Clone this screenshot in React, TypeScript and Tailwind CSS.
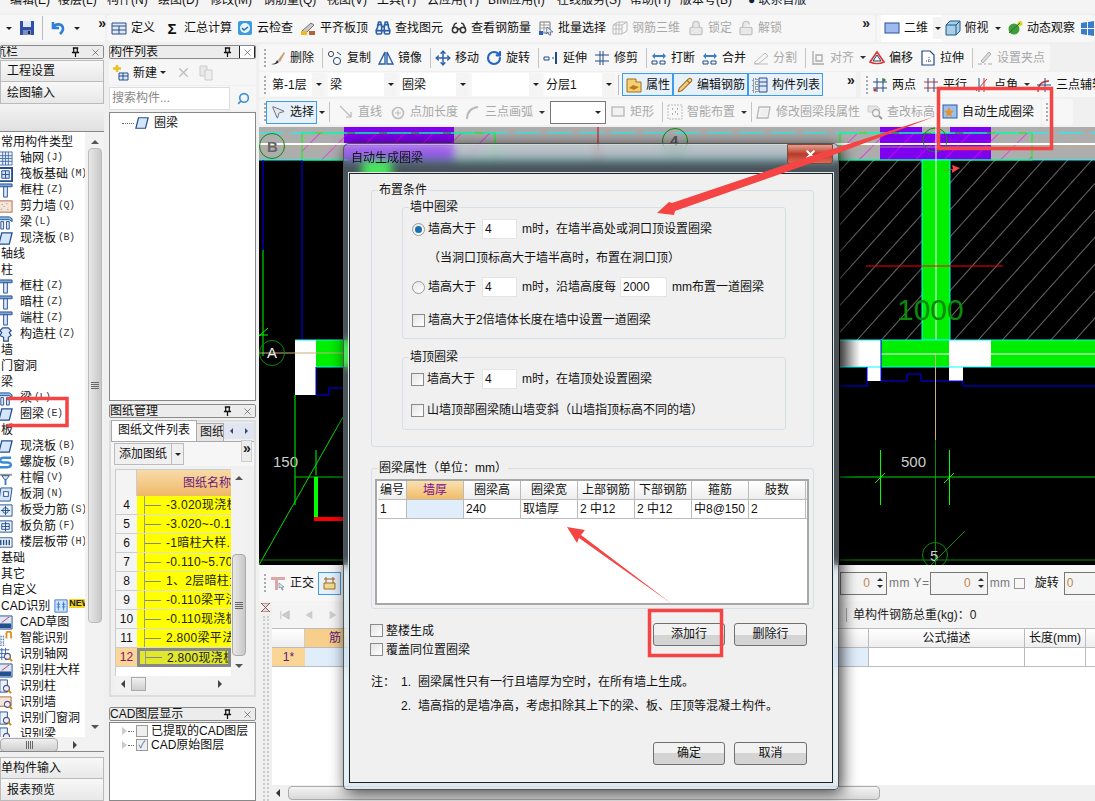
import React from 'react';
import { Binoculars, Glasses, Lock, LockOpen, Move, MousePointer2, Pencil, RotateCw, Search, X } from 'lucide-react';

// small drawn icons, 16px box
const Ico: React.FC<{ children: React.ReactNode; className?: string }> = ({ children, className }) => (
  <svg viewBox="0 0 16 16" className={className ?? 'w-4 h-4 shrink-0'}>{children}</svg>
);

const icons: Record<string, React.ReactNode> = {
  save: <Ico><path d="M1 1h14v14H1z" fill="#2f4fa8" /><path d="M4 1h8v6H4z" fill="#dfe8f5" /><path d="M4 10h8v5H4z" fill="#7b8fc0" /><path d="M9 11h2v3H9z" fill="#223" /></Ico>,
  undo: <Ico><path d="M3 2v6h6M3 8c2-5 10-5 10 1 0 2-1 3-3 5" fill="none" stroke="#2f7fd8" strokeWidth="2.6" /></Ico>,
  define: <Ico><path d="M1 3h14v11H1z" fill="#dfe8f5" stroke="#2a4f8a" /><path d="M1 6h14M1 10h14M8 6v8" stroke="#2a4f8a" /></Ico>,
  cloud: <Ico><rect x="1" y="1" width="14" height="14" rx="2" fill="#3a9be0" /><circle cx="8" cy="8" r="5" fill="#e8f4ff" /><path d="M5 8l2 2 4-3" fill="none" stroke="#2368b0" strokeWidth="1.4" /></Ico>,
  level: <Ico><path d="M2 11l9-8 3 2-8 8z" fill="#c9c9c9" stroke="#777" /><path d="M1 11h6v4H1z" fill="#f2b820" /><path d="M9 11h6v4H9z" fill="#b4643a" /></Ico>,
  binoc: <Ico><Binoculars size={16} color="#2a5fa8" strokeWidth={2.4} /></Ico>,
  glasses: <Ico><Glasses size={16} color="#333" strokeWidth={2.2} /></Ico>,
  lock: <Ico><Lock size={16} color="#c4c4c4" fill="#e8e8e8" strokeWidth={2} /></Ico>,
  unlock: <Ico><LockOpen size={16} color="#c4c4c4" fill="#e8e8e8" strokeWidth={2} /></Ico>,
  batch: <Ico><path d="M2 2h10v11H2z" fill="#fff" stroke="#777" /><path d="M2 5h10M2 8h10M6 2v11" stroke="#999" /><path d="M1 11h4v4H1z" fill="#2a5fc8" /><path d="M9 7l6 5-3 0 1 3-2 0-1-3-2 2z" fill="#dfe8f5" stroke="#346" strokeWidth=".6" /></Ico>,
  grid3d: <Ico><path d="M1 5l5-3h9v9l-5 3H1zM1 5h9v9M10 5l5-3M4 3v11M7 2v12M1 9h9" fill="none" stroke="#bbb" /></Ico>,
  twoD: <Ico><rect x="1" y="3" width="14" height="10" fill="#9dbbee" stroke="#2a4f9a" /></Ico>,
  cube: <Ico><path d="M1 5l4-4h10v10l-4 4H1z" fill="#a9cfe8" stroke="#1d5a88" /><path d="M1 5h10v10M11 5l4-4" fill="none" stroke="#1d5a88" /></Ico>,
  orbit: <Ico><circle cx="7" cy="9" r="5.5" fill="#3f9e3a" /><circle cx="13" cy="3.5" r="2.5" fill="#d8d820" /><path d="M2 13l11-10" stroke="#2a6a2a" /></Ico>,
  win: <Ico><path d="M2 3l6-1v6H2zM9 2l6-1v7H9zM2 9h6v6l-6-1zM9 9h6v7l-6-1z" fill="#3a7cc8" /></Ico>,
  brush: <Ico><path d="M1 14c3 0 5-1 6-4l2 2c-2 2-5 3-8 2z" fill="#333" /><path d="M8 10l6-8 1 1-5 9z" fill="#c8a070" /></Ico>,
  copy: <Ico><circle cx="4" cy="4" r="2.6" fill="none" stroke="#445" /><circle cx="10" cy="11" r="3.6" fill="none" stroke="#246" /><path d="M10 2l4 3" stroke="#246" /></Ico>,
  mirror: <Ico><path d="M7 2v12H1zM9 2v12h6z" fill="none" stroke="#2a5fa8" strokeWidth="1.4" /></Ico>,
  move: <Ico><Move size={16} color="#2a5fa8" strokeWidth={2.2} /></Ico>,
  rotate: <Ico><RotateCw size={16} color="#2364c0" strokeWidth={3.2} /></Ico>,
  extend: <Ico><path d="M1 7h5v3H1zM9 8h2" fill="none" stroke="#234a88" /><path d="M13 2v12" stroke="#234a88" strokeWidth="2" /></Ico>,
  trim: <Ico><path d="M1 5h14M1 11h14" stroke="#234a88" /><path d="M6 1v14M9 1v14" stroke="#234a88" /></Ico>,
  brk: <Ico><path d="M1 11h5v3H1zM9 11h5v3H9z" fill="none" stroke="#234a88" /><path d="M1 6l3-3v2h8V3l3 3-3 3V7H4v2z" fill="#3a7cc8" /></Ico>,
  split: <Ico><path d="M1 13l11-10 3 3-10 8z" fill="none" stroke="#bbb" /><path d="M1 14h14" stroke="#bbb" /></Ico>,
  align: <Ico><path d="M3 1v14M3 14h11M6 5h6v6H6z" fill="none" stroke="#aaa" strokeWidth="1.3" /></Ico>,
  offset: <Ico><path d="M1 12l7-10 7 10c-4 2-10 2-14 0z" fill="none" stroke="#d33" strokeWidth="1.6" /><path d="M4 11l4-6 4 6z" fill="none" stroke="#246" /></Ico>,
  stretch: <Ico><path d="M2 1h8l4 4v10H2z" fill="#fff" stroke="#234a88" strokeWidth="1.2" /><path d="M9 7v6M6 11h6" stroke="#234a88" strokeDasharray="1 1" /></Ico>,
  grip: <Ico><path d="M4 11l8-9 2 2-8 9z" fill="#ddd" stroke="#aaa" /><path d="M1 14h4M7 14h2M11 14h4" stroke="#aaa" /></Ico>,
  folder: <Ico><path d="M1 2h9v3h5v10H1z" fill="#f6cf70" stroke="#a07020" /><path d="M3 11l4-3 6 2-5 3z" fill="#b97a20" /></Ico>,
  pencil: <Ico><Pencil size={16} color="#a07020" fill="#f2cf80" strokeWidth={1.6} /></Ico>,
  list: <Ico><path d="M1 2h4v3H1zM1 7h4v3H1zM1 12h4v3H1z" fill="none" stroke="#444" strokeDasharray="1 1" /><path d="M7 1h8v14H7zM7 5h8M7 9h8" fill="#dbe7f8" stroke="#2a4f8a" /></Ico>,
  two: <Ico><path d="M1 5h14M1 11h14M5 1v14M11 1v14" stroke="#234a88" /><circle cx="12" cy="3" r="1.6" fill="#3a8a2a" /><circle cx="3" cy="13" r="1.6" fill="#b33" /></Ico>,
  par: <Ico><path d="M1 5h14M1 11h14" stroke="#c33" /><path d="M5 1v14M11 1v14" stroke="#234a88" /></Ico>,
  ang: <Ico><path d="M1 11h14M5 1v14" stroke="#234a88" /><path d="M2 14L13 2M10 1v14" stroke="#c33" /></Ico>,
  tri: <Ico><path d="M2 15c0-7 4-11 11-11" fill="none" stroke="#c33" strokeWidth="1.4" /><path d="M1 8h14M9 1v14" stroke="#234a88" /></Ico>,
  cursor: <Ico><MousePointer2 size={16} color="#555" fill="#e8e8f0" strokeWidth={1.2} /></Ico>,
  gline: <Ico><path d="M2 2l11 11M13 8v5H8" fill="none" stroke="#bbb" strokeWidth="1.2" /></Ico>,
  glen: <Ico><circle cx="8" cy="9" r="5.5" fill="none" stroke="#bbb" strokeWidth="1.6" /><path d="M8 6v6M5 9h6" stroke="#bbb" /></Ico>,
  garc: <Ico><path d="M2 15c0-7 4-11 11-12" fill="none" stroke="#bbb" strokeWidth="2" /></Ico>,
  grect: <Ico><rect x="2" y="3" width="12" height="9" fill="#f2f2f2" stroke="#bbb" strokeWidth="1.4" /></Ico>,
  gsmart: <Ico><rect x="1" y="1" width="14" height="14" fill="none" stroke="#bbb" strokeDasharray="2 1" /><path d="M5 5h1M10 5h1M5 10h1M10 10h1M8 8h1" stroke="#aaa" strokeWidth="2" /></Ico>,
  gslab: <Ico><path d="M3 3h11l-2 11H1z" fill="none" stroke="#bbb" strokeWidth="1.4" /><path d="M5 5h7l-1 7H4z" fill="#eee" /></Ico>,
  gsearch: <Ico><path d="M1 2h9l3 3-2 3H1z" fill="#e6e6e6" stroke="#ccc" /><circle cx="9" cy="9" r="3.5" fill="#f6f6f6" stroke="#aaa" strokeWidth="1.4" /><path d="M12 12l3 3" stroke="#999" strokeWidth="2" /></Ico>,
  auto: <Ico><rect x="1" y="1" width="14" height="13" fill="#9cc0ea" stroke="#2a5fa8" /><path d="M7 3l1.5 3.5L12 7l-3 2.4 1 3.6-3-2-3 2 1-3.6L2 7l3.500-.5z" fill="#e8902a" /></Ico>,
  grid: <Ico><path d="M1 1h14v14H1zM1 5h14M1 8h14M1 11h14M5 1v14M8 1v14M11 1v14" fill="#eef3fa" stroke="#3562a8" strokeWidth=".9" /></Ico>,
  raft: <Ico><path d="M1 1h14v14H1z" fill="#fff" stroke="#274f90" strokeWidth="2" /><path d="M4 4h8v8H4zM4 8h8M8 4v8" fill="#cfdff2" stroke="#274f90" /></Ico>,
  tcol: <Ico><path d="M1 1h14v3H1z" fill="#7ea6d8" stroke="#24508f" /><path d="M6 4h4v11H6z" fill="#dbe7f8" stroke="#24508f" /></Ico>,
  wall: <Ico><rect x="1" y="2" width="14" height="12" fill="#f3e5d8" stroke="#b4643a" /><path d="M3 11h1M6 8h1M10 11h1M9 5h1M4 6h1" stroke="#888" /></Ico>,
  beam: <Ico><path d="M1 2h11l3 2v3l-3-2H1z" fill="#8cc0e8" stroke="#24508f" /><path d="M3 7h3v8H3zM9 7h3v8H9z" fill="#dbe7f8" stroke="#24508f" /></Ico>,
  slab: <Ico><path d="M4 2h11l-3 12H1z" fill="#d6e6fa" stroke="#24508f" strokeWidth="1.4" /></Ico>,
  colz: <Ico><path d="M5 1h6l3 3-2 2 2 3-3 2v4H6v-4L2 9l2-3-2-2z" fill="#dbe7f8" stroke="#24508f" strokeWidth="1.3" /></Ico>,
  spiral: <Ico><path d="M14 3H6C1 3 1 8 6 8h4c5 0 5 5 0 5H2" fill="none" stroke="#3a8ad8" strokeWidth="2.6" /></Ico>,
  capv: <Ico><path d="M1 3h14v2H1z" fill="#999" /><path d="M4 5l3 4h2l3-4z" fill="#dbe7f8" stroke="#24508f" /><path d="M7 9h2v6H7z" fill="#3a7cc8" /></Ico>,
  hole: <Ico><path d="M3 1h12l-2 14H1z" fill="#d6e6fa" stroke="#24508f" /><rect x="6" y="5" width="5" height="5" fill="#fff" stroke="#24508f" /></Ico>,
  plateRebar: <Ico><path d="M1 2h14v12H1z" fill="#eaf1fa" stroke="#24508f" /><path d="M8 3v10M3 8h10" stroke="#24508f" /><circle cx="8" cy="8" r="3" fill="none" stroke="#24508f" /></Ico>,
  negRebar: <Ico><path d="M1 2h14v12H1z" fill="#eaf1fa" stroke="#24508f" /><path d="M4 5h8v6H4zM8 3v10M4 8h8" fill="none" stroke="#24508f" /></Ico>,
  strip: <Ico><path d="M1 3h14v10H1z" fill="#fff" stroke="#24508f" /><path d="M3 5v6M6 5v6M9 5v6M12 5v6" stroke="#24508f" strokeWidth="1.6" /></Ico>,
  cad: <Ico><path d="M1 1h14v14H1z" fill="#dbe7f8" stroke="#24508f" /><path d="M2 9h12v5H2z" fill="#24508f" /><path d="M4 8l8-6" stroke="#d33" /></Ico>,
  smartcad: <Ico><path d="M1 6h6M1 9h6M1 12h6M1 15h6M3 5v11M6 5v11" stroke="#3562a8" strokeDasharray="1 1" /><path d="M9 8V3a2.500 2.500 0 015 0v5" fill="none" stroke="#e09020" strokeWidth="2" /></Ico>,
  rgrid: <Ico><path d="M1 3h11M1 7h11M1 11h11M4 1v13M8 1v13" stroke="#3562a8" /><circle cx="10" cy="10" r="3.200" fill="#eef" stroke="#557" strokeWidth="1.2" /><path d="M12 12l3 3" stroke="#c80" strokeWidth="2" /></Ico>,
  rcol: <Ico><path d="M2 1h8v13H2z" fill="#eaf1fa" stroke="#24508f" /><circle cx="9" cy="10" r="3.200" fill="#eef" stroke="#557" strokeWidth="1.2" /><path d="M11 12l3 3" stroke="#c80" strokeWidth="2" /></Ico>,
  rwall: <Ico><path d="M1 2h13v10H1z" fill="#f3e5d8" stroke="#b4643a" /><circle cx="10" cy="10" r="3.200" fill="#eef" stroke="#557" strokeWidth="1.2" /><path d="M12 12l3 3" stroke="#c80" strokeWidth="2" /></Ico>,
  newlist: <Ico><path d="M1 1h14v14H1z" fill="#d6e6fa" stroke="#2a6fc8" /><path d="M5 3v10M11 3v10M3 6h4M3 9h4M9 6h4M9 9h4" stroke="#2a6fc8" /></Ico>,
  newDoc: <Ico><path d="M6 8h9v7H6zM6 11h9M10 8v7" fill="#dfe8f5" stroke="#24508f" /><path d="M4 0v7M0 3.500h8" stroke="#e8c020" strokeWidth="2.400" /></Ico>,
  copyDoc: <Ico><path d="M2 1h7v10H2z" fill="#e8e8e8" stroke="#ccc" /><path d="M7 5h7v10H7z" fill="#eee" stroke="#ccc" /></Ico>,
  pencilLevel: <Ico><path d="M2 8h11v6H2z" fill="#f3d890" stroke="#a07020" /><path d="M4 8V2M11 8V2M2 4h11" stroke="#a05a20" /></Ico>,
  ortho: <Ico><path d="M1 2h14v3H1zM5 5h3v10H5z" fill="#dba8a8" /><path d="M9 8l5 4-2 0 1 3h-1l-1-3-2 1z" fill="#dfe8f5" stroke="#468" strokeWidth=".5" /></Ico>,
};

const Tool: React.FC<{ icon: string; label: string; w: string; dim?: boolean; arrow?: boolean }> = ({ icon, label, w, dim, arrow }) => (
  <div className={`flex items-center gap-[4px] shrink-0 ${w} ${dim ? 'text-[#a8a8a8]' : 'text-[#111]'}`}>
    {icon === 'sigma' ? <span className="w-4 text-center text-[15px] font-bold leading-none">Σ</span> : icons[icon]}
    <span className="whitespace-nowrap">{label}</span>
    {arrow && <span className="ml-[2px] w-0 h-0 border-x-[3px] border-x-transparent border-t-[3px] border-t-[#333]" />}
  </div>
);

const Sep = () => <div className="w-px h-[20px] mx-[4px] bg-[#c4c4c4] shrink-0" />;
const Handle = () => (
  <div className="w-[10px] flex flex-col items-center gap-[2px] shrink-0">
    <span className="w-[2px] h-[2px] bg-[#aaa]" />
    <span className="w-[2px] h-[2px] bg-[#aaa]" />
    <span className="w-[2px] h-[2px] bg-[#aaa]" />
    <span className="w-[2px] h-[2px] bg-[#aaa]" />
    <span className="w-[2px] h-[2px] bg-[#aaa]" />
  </div>
);
const Caret = ({ className }: { className?: string }) => (
  <span className={`w-0 h-0 border-x-[3px] border-x-transparent border-t-[3px] border-t-[#222] shrink-0 ${className ?? ''}`} />
);
const Chevrons = () => <span className="text-[14px] font-bold leading-none tracking-[-1px] text-[#222] shrink-0">»</span>;

const PanelHead: React.FC<{ title: string; clip?: boolean; boxed?: boolean }> = ({ title, clip, boxed }) => (
  <div className="h-[14px] border border-[#8a8a8a] rounded-[2px] bg-[#ececec] flex items-center justify-between overflow-hidden shrink-0">
    <span className={`whitespace-nowrap leading-none ${clip ? '-ml-[19px]' : ''}`}>{title}</span>
    <div className="flex items-center shrink-0 bg-[#ececec]">
      <svg viewBox="0 0 10 12" className="w-[9px] h-[11px] mr-[7px]"><path d="M2 1h6M3 1v5h4V1M1 6h8M5 6v5" fill="none" stroke="#111" strokeWidth="1.400" /></svg>
      <div className={`w-[16px] h-[12px] flex items-center justify-center ${boxed ? 'bg-white border-x border-[#222]' : ''}`}>
        <X size={11} color="#333" strokeWidth={1.2} />
      </div>
    </div>
  </div>
);

const menus = ['编辑(E)', '楼层(L)', '构件(N)', '绘图(D)', '修改(M)', '钢筋量(Q)', '视图(V)', '工具(T)', '云应用(Y)', 'BIM应用(I)', '在线服务(S)', '帮助(H)', '版本号(B)'];
const menuWidths = ['w-[48px]', 'w-[49px]', 'w-[51px]', 'w-[52px]', 'w-[53px]', 'w-[64px]', 'w-[50px]', 'w-[50px]', 'w-[61px]', 'w-[69px]', 'w-[73px]', 'w-[50px]', 'w-[68px]'];

const MenuBar = () => (
  <div className="h-[13px] bg-[#f4f4f4] overflow-hidden flex pl-[10px] shrink-0">
    {menus.map((m, i) => (
      <span key={m} className={`${menuWidths[i]} shrink-0 -mt-[8px] whitespace-nowrap leading-[16px]`}>{m}</span>
    ))}
    <span className="-mt-[8px] leading-[16px] whitespace-nowrap text-[#123]">● 联系首版</span>
  </div>
);

const TopToolbar = () => (
  <div className="h-[30px] flex items-center shrink-0">
    <div className="w-[105px] h-[27px] bg-[#f7f7f7] flex items-center pl-[6px] relative">
      <Caret />
      <span className="w-[9px]" />
      {icons.save}
      <div className="w-px h-[24px] bg-[#bbb] mx-[7px]" />
      {icons.undo}
      <Caret className="ml-[8px]" />
      <div className="ml-[18px] -mt-[10px]"><Chevrons /></div>
    </div>
    <div className="ml-[2px] w-[768px] h-[27px] bg-[#f7f7f7] flex items-center pl-[4px] pr-[6px] rounded-sm">
      <Tool icon="define" label="定义" w="w-[53px]" />
      <Tool icon="sigma" label="汇总计算" w="w-[73px]" />
      <Tool icon="cloud" label="云检查" w="w-[63px]" />
      <Tool icon="level" label="平齐板顶" w="w-[75px]" />
      <Tool icon="binoc" label="查找图元" w="w-[76px]" />
      <Tool icon="glasses" label="查看钢筋量" w="w-[87px]" />
      <Tool icon="batch" label="批量选择" w="w-[74px]" />
      <Tool icon="grid3d" label="钢筋三维" w="w-[76px]" dim />
      <Tool icon="lock" label="锁定" w="w-[50px]" dim />
      <Tool icon="unlock" label="解锁" w="w-[60px]" dim />
      <div className="ml-auto -mt-[10px]"><Chevrons /></div>
    </div>
    <div className="ml-[2px] flex-1 h-[27px] bg-[#f7f7f7] flex items-center pl-[4px] overflow-hidden rounded-sm">
      <div className="flex items-center bg-white h-[27px] pl-[3px] w-[61px] shrink-0">
        <Tool icon="twoD" label="二维" w="w-[49px]" />
        <div className="w-[12px] h-[22px] bg-[#f4f4f4] flex items-center justify-center"><Caret /></div>
      </div>
      <div className="w-[4px]" />
      <Tool icon="cube" label="俯视" w="w-[50px]" />
      <Caret />
      <div className="w-[10px]" />
      <Tool icon="orbit" label="动态观察" w="w-[72px]" />
      {icons.win}
    </div>
  </div>
);

const Row2 = () => (
  <div className="h-[29px] flex items-center shrink-0">
    <div className="w-[791px] h-[27px] bg-[#f7f7f7] rounded-sm flex items-center pl-[1px]">
      <Handle />
      <Tool icon="brush" label="删除" w="w-[48px]" />
      <Sep />
      <Tool icon="copy" label="复制" w="w-[51px]" />
      <Tool icon="mirror" label="镜像" w="w-[48px]" />
      <Sep />
      <Tool icon="move" label="移动" w="w-[51px]" />
      <Tool icon="rotate" label="旋转" w="w-[48px]" />
      <Sep />
      <Tool icon="extend" label="延伸" w="w-[51px]" />
      <Tool icon="trim" label="修剪" w="w-[48px]" />
      <Sep />
      <Tool icon="brk" label="打断" w="w-[51px]" />
      <Tool icon="brk" label="合并" w="w-[51px]" />
      <Tool icon="split" label="分割" w="w-[48px]" dim />
      <Sep />
      <Tool icon="align" label="对齐" w="w-[59px]" dim arrow />
      <Tool icon="offset" label="偏移" w="w-[51px]" />
      <Tool icon="stretch" label="拉伸" w="w-[48px]" />
      <Sep />
      <Tool icon="grip" label="设置夹点" w="w-[70px]" dim />
    </div>
  </div>
);

const Select: React.FC<{ label?: string; w: string }> = ({ label, w }) => (
  <div className={`${w} h-[23px] bg-white flex items-center justify-between pl-[2px] shrink-0`}>
    <span>{label}</span>
    <div className="w-[13px] h-[23px] bg-[#f4f4f4] flex items-center justify-center"><Caret /></div>
  </div>
);

const Toggle: React.FC<{ icon: string; label: string; w: string }> = ({ icon, label, w }) => (
  <div className={`${w} h-[23px] bg-[#e6f1fc] border border-[#3d9be9] flex items-center gap-[4px] pl-[3px] shrink-0`}>
    {icons[icon]}
    <span className="whitespace-nowrap">{label}</span>
  </div>
);

const Row3 = () => (
  <div className="h-[25px] flex items-center shrink-0">
    <div className="w-[597px] h-[25px] bg-[#f7f7f7] flex items-center pl-[1px]">
      <Handle />
      <Select label="第-1层" w="w-[55px]" />
      <span className="w-[3px]" />
      <Select label="梁" w="w-[69px]" />
      <span className="w-[3px]" />
      <Select label="圈梁" w="w-[69px]" />
      <span className="w-[3px]" />
      <Select w="w-[70px]" />
      <span className="w-[2px]" />
      <Select label="分层1" w="w-[71px]" />
      <div className="w-px h-[20px] bg-[#bbb] mx-[3px]" />
      <Toggle icon="folder" label="属性" w="w-[51px]" />
      <Toggle icon="pencil" label="编辑钢筋" w="w-[75px]" />
      <Toggle icon="list" label="构件列表" w="w-[75px]" />
      <div className="ml-[24px] -mt-[10px]"><Chevrons /></div>
    </div>
    <div className="ml-[5px] flex-1 h-[25px] bg-[#f7f7f7] flex items-center overflow-hidden pl-[1px]">
      <Handle />
      <Tool icon="two" label="两点" w="w-[51px]" />
      <Tool icon="par" label="平行" w="w-[51px]" />
      <Tool icon="ang" label="点角" w="w-[62px]" arrow />
      <Tool icon="tri" label="三点辅轴" w="w-[70px]" />
    </div>
  </div>
);

const Row4 = () => (
  <div className="h-[30px] flex items-center shrink-0">
    <div className="w-[782px] h-[26px] bg-[#f7f7f7] rounded-sm flex items-center pl-[1px]">
      <Handle />
      <div className="w-[51px] -ml-[4px] h-[23px] bg-[#e6f1fc] border border-[#3d9be9] flex items-center gap-[4px] pl-[3px] shrink-0">
        {icons.cursor}
        <span>选择</span>
      </div>
      <Caret className="ml-[2px]" />
      <Sep />
      <span className="w-[4px]" />
      <Tool icon="gline" label="直线" w="w-[52px]" dim />
      <Tool icon="glen" label="点加长度" w="w-[75px]" dim />
      <Tool icon="garc" label="三点画弧" w="w-[85px]" dim arrow />
      <div className="w-[56px] h-[23px] bg-white border border-[#777] flex items-center justify-end pr-[4px] shrink-0"><Caret /></div>
      <span className="w-[4px]" />
      <Tool icon="grect" label="矩形" w="w-[48px]" dim />
      <Sep />
      <Tool icon="gsmart" label="智能布置" w="w-[80px]" dim arrow />
      <Sep />
      <Tool icon="gslab" label="修改圈梁段属性" w="w-[111px]" dim />
      <Tool icon="gsearch" label="查改标高" w="w-[75px]" dim />
      <Tool icon="auto" label="自动生成圈梁" w="w-[96px]" />
    </div>
    <div className="ml-[1px] w-[31px] h-[26px] bg-[#f7f7f7] flex items-center rounded-sm"><Handle /></div>
  </div>
);

// the drawing behind the dialog
const CadView = () => (
  <svg viewBox="259 127 836 438" className="w-[836px] h-[438px] shrink-0 block">
    <defs>
      <pattern id="hatch" patternUnits="userSpaceOnUse" width="18" height="18" patternTransform="rotate(42)">
        <line x1="0" y1="0" x2="0" y2="18" stroke="#d0d0d0" strokeWidth="1" />
      </pattern>
      <pattern id="pink" patternUnits="userSpaceOnUse" width="20" height="20" patternTransform="rotate(45)">
        <line x1="0" y1="0" x2="0" y2="20" stroke="#f0f" strokeWidth="1.200" />
      </pattern>
      <linearGradient id="fade" x1="0" x2="1" y1="0" y2="0">
        <stop offset="0" stopColor="#777" />
        <stop offset="0.5" stopColor="#fff" />
      </linearGradient>
    </defs>
    <rect x="259" y="127" width="836" height="438" fill="#000" />
    <rect x="259" y="127" width="836" height="33" fill="#adadad" />
    <rect x="344" y="127" width="110" height="33" fill="#7f00ee" />
    <rect x="880" y="127" width="111" height="33" fill="#7f00ee" />
    <rect x="922" y="127" width="28" height="6" fill="#adadad" />
    <rect x="302" y="133" width="193" height="27" fill="url(#pink)" stroke="#0f0" />
    <rect x="840" y="133" width="192" height="27" fill="url(#pink)" stroke="#0f0" />
    <line x1="259" y1="133" x2="1095" y2="133" stroke="#0ff" strokeDasharray="24 8" />
    <line x1="259" y1="144" x2="1095" y2="144" stroke="#fff" strokeWidth="2" />
    <line x1="259" y1="147" x2="1095" y2="147" stroke="#c8b078" strokeWidth=".7" />
    <line x1="259" y1="160" x2="1095" y2="160" stroke="#0ff" />
    <line x1="598" y1="127" x2="598" y2="160" stroke="#d00" />
    <circle cx="272" cy="146" r="12.500" fill="none" stroke="#0a8a0a" />
    <text x="267" y="152" fontSize="15" fontWeight="bold" fill="#666">B</text>
    <circle cx="675" cy="141" r="12.500" fill="none" stroke="#0a8a0a" />
    <text x="670" y="146" fontSize="15" fontWeight="bold" fill="#555">4</text>
    <circle cx="935" cy="140" r="12" fill="none" stroke="#0a8a0a" />
    <line x1="263" y1="160" x2="263" y2="250" stroke="#00f" />
    <line x1="263" y1="250" x2="263" y2="356" stroke="#0f0" />
    <line x1="302" y1="160" x2="302" y2="340" stroke="#00f" />
    <rect x="362" y="160" width="30" height="180" fill="#0e0" />
    <rect x="840" y="160" width="255" height="180" fill="url(#hatch)" />
    <rect x="922" y="160" width="28" height="180" fill="#0e0" stroke="#0ff" />
    <line x1="936" y1="127" x2="936" y2="354" stroke="#fff" />
    <rect x="316" y="340" width="100" height="27" fill="#0e0" />
    <rect x="295" y="340" width="21" height="55" fill="#fff" />
    <line x1="295" y1="340" x2="343" y2="340" stroke="#0ff" />
    <line x1="316" y1="367" x2="343" y2="367" stroke="#0ff" />
    <path d="M316 367v28h13v-7h14" fill="none" stroke="#00f" />
    <line x1="259" y1="353" x2="343" y2="353" stroke="#c8b078" />
    <circle cx="272" cy="353" r="12.500" fill="none" stroke="#0a8a0a" />
    <text x="267" y="358" fontSize="15" fill="#eee">A</text>
    <line x1="259" y1="336" x2="268" y2="328" stroke="#0f0" />
    <line x1="259" y1="335" x2="268" y2="335" stroke="#0f0" />
    <text x="273" y="467" fontSize="15" fill="#ccc">150</text>
    <line x1="295" y1="395" x2="295" y2="505" stroke="#0f0" />
    <line x1="316" y1="450" x2="316" y2="475" stroke="#0f0" />
    <line x1="295" y1="477" x2="343" y2="477" stroke="#0c0" />
    <line x1="259" y1="565" x2="343" y2="417" stroke="#0d0" />
    <rect x="314" y="477" width="4" height="42" fill="#0f0" />
    <rect x="314" y="517" width="29" height="4" fill="#f00" />
    <line x1="259" y1="560" x2="343" y2="560" stroke="#0a7a0a" />
    <rect x="840" y="340" width="41" height="27" fill="url(#fade)" />
    <rect x="867" y="367" width="14" height="14" fill="#fff" />
    <rect x="881" y="340" width="68" height="27" fill="#0e0" />
    <rect x="949" y="340" width="42" height="27" fill="#fff" />
    <rect x="949" y="367" width="14" height="14" fill="#fff" />
    <rect x="991" y="340" width="104" height="27" fill="#0e0" />
    <line x1="881" y1="354" x2="949" y2="354" stroke="#fff" />
    <line x1="991" y1="354" x2="1095" y2="354" stroke="#fff" />
    <line x1="840" y1="340" x2="1095" y2="340" stroke="#0ff" />
    <line x1="840" y1="367" x2="1095" y2="367" stroke="#0ff" />
    <path d="M840 386h27v-19M881 340v41h26v-7h14v7h42v5h132" fill="none" stroke="#00f" />
    <line x1="935.500" y1="354" x2="935.500" y2="440" stroke="#c8b078" />
    <line x1="935.500" y1="440" x2="935.500" y2="565" stroke="#0a8a0a" />
    <line x1="866" y1="266" x2="1003" y2="266" stroke="#f00" />
    <text x="897" y="320" fontSize="30" fill="#0a8a0a">1000</text>
    <text x="901" y="467" fontSize="15" fill="#ccc">500</text>
    <line x1="840" y1="477" x2="1095" y2="477" stroke="#0d0" />
    <line x1="880.500" y1="450" x2="880.500" y2="505" stroke="#0f0" />
    <line x1="949.500" y1="450" x2="949.500" y2="505" stroke="#0f0" />
    <line x1="875" y1="483" x2="885" y2="473" stroke="#0f0" />
    <line x1="944" y1="483" x2="954" y2="473" stroke="#0f0" />
    <line x1="840" y1="560" x2="1095" y2="560" stroke="#0a8a0a" />
    <circle cx="935" cy="555" r="12.500" fill="none" stroke="#0a8a0a" />
    <text x="930" y="561" fontSize="15" fill="#ccc">5</text>
    <line x1="928" y1="568" x2="965" y2="531" stroke="#0a8a0a" />
  </svg>
);

const StatusRow = () => (
  <div className="h-[36px] bg-[#f7f7f7] flex items-center pl-[1px] shrink-0">
    <Handle />
    <Tool icon="ortho" label="正交" w="w-[48px]" />
    <div className="w-[23px] h-[23px] bg-[#e6f1fc] border border-[#3d9be9] flex items-center justify-center shrink-0">{icons.pencilLevel}</div>
    <div className="w-[499px] shrink-0" />
    <div className="w-[47px] h-[23px] bg-[#f4f4f4] border border-[#777] flex items-center justify-end pr-[3px] gap-[4px] shrink-0">
      <span className="text-[#c08850]">0</span>
      <div className="flex flex-col gap-[4px] ml-[3px]">
        <span className="w-0 h-0 border-x-[3px] border-x-transparent border-b-[3px] border-b-[#333]" />
        <span className="w-0 h-0 border-x-[3px] border-x-transparent border-t-[3px] border-t-[#333]" />
      </div>
    </div>
    <span className="ml-[2px] w-[45px] text-[#777] tracking-[.5px] whitespace-nowrap">mm Y=</span>
    <div className="w-[58px] h-[23px] bg-[#f4f4f4] border border-[#777] flex items-center justify-end pr-[3px] gap-[4px] shrink-0">
      <span className="text-[#c08850]">0</span>
      <div className="flex flex-col gap-[4px] ml-[3px]">
        <span className="w-0 h-0 border-x-[3px] border-x-transparent border-b-[3px] border-b-[#333]" />
        <span className="w-0 h-0 border-x-[3px] border-x-transparent border-t-[3px] border-t-[#333]" />
      </div>
    </div>
    <span className="ml-[2px] w-[25px] text-[#777] tracking-[.5px]">mm</span>
    <div className="w-px h-[16px] bg-[#bbb] mr-[3px]" />
    <div className="w-[11px] h-[11px] border border-[#999] bg-[#f8f8f8] shrink-0" />
    <span className="ml-[10px] whitespace-nowrap">旋转</span>
    <div className="ml-[5px] w-[40px] h-[23px] bg-[#f4f4f4] border border-[#777] shrink-0 pl-[2px] leading-[21px] text-[#c08850]">0</div>
  </div>
);

const BottomPane = () => (
  <div className="flex-1 flex min-h-0">
    <div className="w-[13px] shrink-0 bg-[#f0f0f0] flex flex-col items-center pt-[2px]">
      <svg viewBox="0 0 10 10" className="w-[9px] h-[9px]"><path d="M0 0h10L0 10h10z" fill="#ddd" stroke="#944" /></svg>
      <div className="mt-[4px] w-[6px] flex-1 border-x-[2px] border-dotted border-[#ccc]" />
    </div>
    <div className="flex-1 flex flex-col min-w-0">
      <div className="h-[27px] bg-[#f4f4f4] flex items-center shrink-0 pl-[8px] text-[#ccc] gap-[14px]">
        <svg viewBox="0 0 12 12" className="w-[10px] h-[12px]"><path d="M1 1v10M11 1L3 6l8 5z" fill="#ccc" stroke="#bbb" /></svg>
        <svg viewBox="0 0 12 12" className="w-[10px] h-[12px]"><path d="M10 1L2 6l8 5z" fill="#ccc" /></svg>
        <svg viewBox="0 0 12 12" className="w-[10px] h-[12px]"><path d="M2 1l8 5-8 5z" fill="#ccc" /></svg>
        <div className="w-[480px] shrink-0" />
        <div className="w-px h-[14px] bg-[#aaa] shrink-0" />
        <span className="-ml-[8px] text-[#222] whitespace-nowrap">单构件钢筋总重(kg)：0</span>
      </div>
      <div className="grid grid-cols-[33px_40px_524px_156px_61px_1fr] h-[20px] shrink-0 border-y border-[#bbb] bg-gradient-to-b from-white to-[#eee] leading-[18px]">
        <div className="border-r border-[#ccc]" />
        <div className="bg-[#f7cf8a] pl-[24px] text-[#5a1a7a]">筋</div>
        <div className="border-r border-[#bbb]" />
        <div className="border-r border-[#bbb] text-center">公式描述</div>
        <div className="border-r border-[#bbb] text-center whitespace-nowrap">长度(mm)</div>
        <div />
      </div>
      <div className="grid grid-cols-[33px_40px_524px_156px_61px_1fr] h-[19px] shrink-0 border-b border-[#bbb] bg-white leading-[18px]">
        <div className="bg-[#fbd596] text-center text-[#5a1a7a]">1*</div>
        <div className="bg-[#e0eefc]" />
        <div className="bg-[#e0eefc] border-r border-[#bbb]" />
        <div className="border-r border-[#bbb]" />
        <div className="border-r border-[#bbb]" />
        <div />
      </div>
      <div className="flex-1 bg-white" />
      <div className="h-[16px] bg-[#f0f0f0] flex items-center shrink-0 pl-[4px]">
        <span className="w-0 h-0 border-y-[4px] border-y-transparent border-r-[4px] border-r-[#333]" />
        <div className="ml-[8px] w-[592px] h-[14px] bg-gradient-to-b from-[#f4f4f4] to-[#d8d8d8] border border-[#aaa] rounded-sm" />
      </div>
    </div>
  </div>
);

type NavItem = { label: string; hot?: string; icon?: string; group?: boolean };
const navItems: NavItem[] = [
  { label: '常用构件类型', group: true },
  { label: '轴网', hot: '(J)', icon: 'grid' },
  { label: '筏板基础', hot: '(M)', icon: 'raft' },
  { label: '框柱', hot: '(Z)', icon: 'tcol' },
  { label: '剪力墙', hot: '(Q)', icon: 'wall' },
  { label: '梁', hot: '(L)', icon: 'beam' },
  { label: '现浇板', hot: '(B)', icon: 'slab' },
  { label: '轴线', group: true },
  { label: '柱', group: true },
  { label: '框柱', hot: '(Z)', icon: 'tcol' },
  { label: '暗柱', hot: '(Z)', icon: 'tcol' },
  { label: '端柱', hot: '(Z)', icon: 'tcol' },
  { label: '构造柱', hot: '(Z)', icon: 'colz' },
  { label: '墙', group: true },
  { label: '门窗洞', group: true },
  { label: '梁', group: true },
  { label: '梁', hot: '(L)', icon: 'beam' },
  { label: '圈梁', hot: '(E)', icon: 'slab' },
  { label: '板', group: true },
  { label: '现浇板', hot: '(B)', icon: 'slab' },
  { label: '螺旋板', hot: '(B)', icon: 'spiral' },
  { label: '柱帽', hot: '(V)', icon: 'capv' },
  { label: '板洞', hot: '(N)', icon: 'hole' },
  { label: '板受力筋', hot: '(S)', icon: 'plateRebar' },
  { label: '板负筋', hot: '(F)', icon: 'negRebar' },
  { label: '楼层板带', hot: '(H)', icon: 'strip' },
  { label: '基础', group: true },
  { label: '其它', group: true },
  { label: '自定义', group: true },
];
const cadItems: NavItem[] = [
  { label: 'CAD草图', icon: 'cad' },
  { label: '智能识别', icon: 'smartcad' },
  { label: '识别轴网', icon: 'rgrid' },
  { label: '识别柱大样', icon: 'cad' },
  { label: '识别柱', icon: 'rcol' },
  { label: '识别墙', icon: 'rwall' },
  { label: '识别门窗洞', icon: 'rcol' },
  { label: '识别梁', icon: 'rcol' },
];

const NavRow: React.FC<{ item: NavItem }> = ({ item }) => (
  <div className="h-[16px] flex items-center whitespace-nowrap shrink-0">
    {item.group ? (
      <span className="pl-[1px]">{item.label}</span>
    ) : (
      <>
        <div className="w-[20px] -ml-[2px] flex items-center shrink-0 [&>svg]:w-[15px] [&>svg]:h-[15px]">{item.icon && icons[item.icon]}</div>
        <span className="ml-[2px]">{item.label}</span>
        {item.hot && <span className="ml-[2px] font-['Liberation_Mono',monospace] text-[10px] tracking-[-.5px] text-[#333]">{item.hot}</span>}
      </>
    )}
  </div>
);

const NavPanel = () => (
  <div className="w-[104px] shrink-0 flex flex-col pt-[2px]">
    <PanelHead title="导航栏" clip />
    <div className="h-[22px] mt-[1px] border border-[#bbb] bg-gradient-to-b from-[#f8f8f8] to-[#e8e8e8] flex items-center pl-[6px] shrink-0">工程设置</div>
    <div className="h-[22px] border-x border-b border-[#bbb] bg-gradient-to-b from-[#f8f8f8] to-[#e8e8e8] flex items-center pl-[6px] shrink-0">绘图输入</div>
    <div className="h-[27px] bg-gradient-to-b from-[#f4f4f4] to-[#e0e0e0] shrink-0" />
    <div className="h-[621px] bg-white border-y border-[#888] flex flex-col shrink-0 overflow-hidden">
      <div className="flex h-[605px] shrink-0">
        <div className="w-[85px] overflow-hidden flex flex-col pt-[2px]">
          {navItems.map((it, i) => <NavRow key={i} item={it} />)}
          <div className="h-[16px] flex items-center whitespace-nowrap shrink-0 pl-[1px]">
            <span>CAD识别</span>
            <div className="ml-[4px] [&>svg]:w-[14px] [&>svg]:h-[14px]">{icons.newlist}</div>
            <span className="ml-[1px] -mt-[5px] text-[9px] font-bold text-[#222] bg-[#f6d520] leading-[9px]">NEW</span>
          </div>
          {cadItems.map((it, i) => <NavRow key={i} item={it} />)}
        </div>
        <div className="flex-1 bg-[#f2f2f2] flex flex-col items-center pt-[8px]">
          <span className="w-0 h-0 border-x-[4px] border-x-transparent border-b-[4px] border-b-[#555]" />
          <div className="mt-[4px] w-[14px] h-[475px] bg-gradient-to-r from-[#e8e8e8] to-[#c8c8c8] border border-[#bbb] rounded-sm flex items-center justify-center">
            <div className="w-[8px] h-[7px] border-y-[3px] border-double border-[#666]" />
          </div>
          <span className="mt-auto mb-[8px] w-0 h-0 border-x-[4px] border-x-transparent border-t-[4px] border-t-[#555]" />
        </div>
      </div>
      <div className="h-[15px] bg-[#f2f2f2] flex items-center shrink-0">
        <div className="w-[58px] h-[14px] bg-gradient-to-b from-[#f0f0f0] to-[#cfcfcf] border border-[#aaa] rounded-sm flex items-center justify-center">
          <div className="w-[7px] h-[8px] border-x-[3px] border-double border-[#666]" />
        </div>
        <span className="ml-[15px] w-0 h-0 border-y-[4px] border-y-transparent border-l-[4px] border-l-[#444]" />
      </div>
    </div>
    <div className="h-[22px] mt-[5px] border border-[#bbb] bg-gradient-to-b from-[#f8f8f8] to-[#e8e8e8] flex items-center shrink-0 whitespace-nowrap">单构件输入</div>
    <div className="h-[22px] border-x border-b border-[#bbb] bg-gradient-to-b from-[#f8f8f8] to-[#e8e8e8] flex items-center pl-[6px] shrink-0">报表预览</div>
  </div>
);

const drawings = [
  { n: '4', t: '-3.020现浇板' },
  { n: '5', t: '-3.020~-0.1' },
  { n: '6', t: '-1暗柱大样.' },
  { n: '7', t: '-0.110~5.70' },
  { n: '8', t: '1、2层暗柱大' },
  { n: '9', t: '-0.110梁平法' },
  { n: '10', t: '-0.110现浇板' },
  { n: '11', t: '2.800梁平法' },
];

const DrawingRow: React.FC<{ n: string; t: string; sel?: boolean }> = ({ n, t, sel }) => (
  <div className="flex h-[19px] shrink-0">
    <div className={`w-[21px] text-center leading-[19px] shrink-0 border-b border-[#ccc] ${sel ? 'bg-[#fbd596] text-[#7a1a6a]' : 'bg-[#f4f4f4]'}`}>{n}</div>
    <div className={`w-[95px] flex items-center overflow-hidden whitespace-nowrap tracking-[.3px] ${sel ? 'bg-[#dfe82c] border-[3px] border-[#888]' : 'bg-[#ffff00] border-b border-[#ddd]'}`}>
      <span className={`h-full border-r border-[#999] shrink-0 ${sel ? 'w-[6px]' : 'w-[8px]'}`} />
      <span className="w-[16px] h-px bg-[#888] shrink-0" />
      <span className="ml-[5px] text-[#222]">{t}</span>
    </div>
  </div>
);

const MiddlePanel = () => (
  <div className="w-[147px] shrink-0 flex flex-col pt-[2px] ml-[5px]">
    <PanelHead title="构件列表" boxed />
    <div className="h-[25px] mt-[1px] bg-[#f6f6f6] flex items-center pl-[4px] shrink-0">
      {icons.newDoc}
      <span className="ml-[4px]">新建</span>
      <Caret className="ml-[3px]" />
      <X size={15} color="#bbb" strokeWidth={2} className="ml-[10px]" />
      <div className="ml-[7px]">{icons.copyDoc}</div>
    </div>
    <div className="h-[24px] mt-[1px] bg-[#f6f6f6] flex items-center shrink-0">
      <div className="w-[121px] h-[23px] bg-white border border-[#ddd] pl-[2px] leading-[21px] text-[#888]">搜索构件...</div>
      <Search size={13} color="#3d8fd8" strokeWidth={3} className="ml-[7px] -scale-x-100" />
    </div>
    <div className="h-[289px] mt-[2px] bg-white border border-[#888] flex items-start pt-[2px] pl-[12px] shrink-0">
      <div className="flex items-center h-[16px]">
        <span className="w-[12px] border-t border-dotted border-[#666]" />
        <div className="ml-[1px] [&>svg]:w-[14px] [&>svg]:h-[14px]">{icons.slab}</div>
        <span className="ml-[5px]">圈梁</span>
      </div>
    </div>
    <div className="mt-[3px]"><PanelHead title="图纸管理" /></div>
    <div className="h-[277px] mt-[2px] border-2 border-[#ddd] flex flex-col shrink-0">
      <div className="flex h-[21px] items-end shrink-0 -mt-[1px] border-b border-[#aaa]">
        <div className="w-[86px] h-[21px] bg-white border-x border-t border-[#aaa] text-center leading-[19px] shrink-0">图纸文件列表</div>
        <div className="w-[27px] h-[18px] bg-[#e4e4e4] border-r border-t border-[#aaa] overflow-hidden whitespace-nowrap pl-[3px] leading-[16px] shrink-0">图纸楼层</div>
        <div className="flex-1 flex items-center justify-around h-[16px] mb-[2px] bg-[#dfe6f2]">
          <span className="w-0 h-0 border-y-[3px] border-y-transparent border-r-[3px] border-r-[#446]" />
          <span className="w-0 h-0 border-y-[3px] border-y-transparent border-l-[3px] border-l-[#446]" />
        </div>
      </div>
      <div className="h-[24px] flex items-center pl-[3px] shrink-0 bg-[#f6f6f6]">
        <div className="w-[58px] h-[22px] border border-[#bbb] bg-[#f0f0f0] text-center leading-[20px] shrink-0">添加图纸</div>
        <div className="w-[12px] h-[22px] border-y border-r border-[#bbb] flex items-center justify-center bg-[#f0f0f0]"><Caret /></div>
        <div className="ml-auto mr-[2px] w-[11px] h-[22px] bg-[#ececec] border border-[#ccc] text-center -mt-[6px]"><Chevrons /></div>
      </div>
      <div className="flex flex-1 min-h-0 ml-[4px] mr-[4px] mt-[3px]">
        <div className="w-[116px] flex flex-col border-l border-t border-[#ccc] bg-white">
          <div className="flex h-[26px] shrink-0">
            <div className="w-[21px] bg-[#f4f4f4] border-r border-[#ccc] shrink-0" />
            <div className="w-[95px] bg-gradient-to-b from-[#f7dba8] to-[#f0b868] text-right leading-[26px] text-[#6a1a7a] whitespace-nowrap overflow-hidden">图纸名称</div>
          </div>
          {drawings.map((d) => <DrawingRow key={d.n} n={d.n} t={d.t} />)}
          <DrawingRow n="12" t="2.800现浇板" sel />
        </div>
        <div className="w-[16px] bg-[#f2f2f2] flex flex-col items-center pt-[7px]">
          <span className="w-0 h-0 border-x-[4px] border-x-transparent border-b-[4px] border-b-[#555]" />
          <div className="mt-[74px] w-[14px] h-[102px] bg-gradient-to-r from-[#e8e8e8] to-[#c8c8c8] border border-[#aaa] rounded-sm flex items-center justify-center">
            <div className="w-[8px] h-[7px] border-y-[3px] border-double border-[#666]" />
          </div>
          <span className="mt-[8px] w-0 h-0 border-x-[4px] border-x-transparent border-t-[4px] border-t-[#555]" />
        </div>
      </div>
      <div className="h-[16px] mx-[4px] flex items-center bg-[#f2f2f2] shrink-0 pl-[6px] mb-[3px]">
        <span className="w-0 h-0 border-y-[4px] border-y-transparent border-r-[4px] border-r-[#444]" />
        <div className="ml-[6px] w-[15px] h-[14px] bg-gradient-to-b from-[#f0f0f0] to-[#cfcfcf] border border-[#aaa]" />
        <span className="ml-[72px] w-0 h-0 border-y-[4px] border-y-transparent border-l-[4px] border-l-[#444]" />
      </div>
    </div>
    <div className="mt-[10px]"><PanelHead title="CAD图层显示" /></div>
    <div className="flex-1 mt-px bg-white border border-[#888] pl-[12px] pt-[1px]">
      <div className="flex items-center h-[14px]">
        <span className="w-0 h-0 border-y-[4px] border-y-transparent border-l-[5px] border-l-[#ccc]" />
        <span className="ml-[1px] w-[6px] border-t border-dotted border-[#666]" />
        <div className="ml-[2px] w-[12px] h-[12px] border border-[#999] bg-[#eee]" />
        <span className="ml-[3px] whitespace-nowrap">已提取的CAD图层</span>
      </div>
      <div className="flex items-center h-[14px]">
        <span className="w-0 h-0 border-y-[4px] border-y-transparent border-l-[5px] border-l-[#ccc]" />
        <span className="ml-[1px] w-[6px] border-t border-dotted border-[#666]" />
        <div className="ml-[2px] w-[12px] h-[12px] border border-[#999] bg-[#eee] text-[#3a5fa8] text-[10px] leading-[10px] text-center">✓</div>
        <span className="ml-[3px] whitespace-nowrap">CAD原始图层</span>
      </div>
    </div>
  </div>
);

const Group: React.FC<{ title: string; className: string; children?: React.ReactNode }> = ({ title, className, children }) => (
  <div className={`relative border border-[#d5dfe5] rounded-[3px] shrink-0 ${className}`}>
    <span className="absolute -top-[9px] left-[6px] px-px bg-[#f0f0f0] leading-[16px] whitespace-nowrap">{title}</span>
    {children}
  </div>
);

const Radio: React.FC<{ on?: boolean }> = ({ on }) => (
  <span className="w-[13px] h-[13px] rounded-full border border-[#999] bg-gradient-to-br from-[#e8e8e8] to-white flex items-center justify-center shrink-0">
    {on && <span className="w-[7px] h-[7px] rounded-full bg-[#1a6fb0]" />}
  </span>
);
const Check = () => <span className="w-[13px] h-[13px] border border-[#8a8a8a] bg-gradient-to-br from-[#e4e4e4] to-white shrink-0" />;
const Field: React.FC<{ v: string; w?: string }> = ({ v, w }) => (
  <span className={`${w ?? 'w-[35px]'} h-[20px] bg-white border border-[#e4e4e4] leading-[18px] pl-[2px] shrink-0`}>{v}</span>
);
const Btn: React.FC<{ label: string; w: string }> = ({ label, w }) => (
  <div className={`${w} h-[23px] rounded-[3px] border border-[#707070] bg-gradient-to-b from-[#f2f2f2] from-50% to-[#d4d4d4] to-50% text-center leading-[21px] shrink-0`}>{label}</div>
);

const tableHeads = ['编号', '墙厚', '圈梁高', '圈梁宽', '上部钢筋', '下部钢筋', '箍筋', '肢数'];
const tableRow = ['1', '', '240', '取墙厚', '2 中12', '2 中12', '中8@150', '2'];

const Dialog = () => (
  <div className="absolute left-[343px] top-[143px] w-[496px] h-[647px] rounded-t-[6px] rounded-b-[4px] border border-[#555] bg-[rgba(190,215,235,0.38)] backdrop-blur-[5px] shadow-[3px_3px_16px_rgba(0,0,0,0.75)] flex flex-col">
    <div className="h-[29px] flex items-start justify-between shrink-0">
      <span className="ml-[7px] mt-[6px] leading-[16px] text-[#111]">自动生成圈梁</span>
      <div className="w-[46px] h-[20px] mr-[5px] rounded-b-[3px] border border-[#7a4a40] bg-gradient-to-b from-[#e8a090] via-[#b83a2a] to-[#d86a55] flex items-center justify-center">
        <X size={13} color="#fff" strokeWidth={4} />
      </div>
    </div>
    <div className="flex-1 ml-[5px] mr-[5px] mb-[6px] border border-[#222] outline outline-1 outline-[#ddeaf4] bg-[#f0f0f0] flex flex-col pl-[21px] pt-[16px]">
      <Group title="布置条件" className="w-[443px] h-[257px] pl-[30px] pt-[16px]">
        <Group title="墙中圈梁" className="w-[384px] h-[132px] pl-[9px] pt-[11px]">
          <div className="flex items-center h-[20px] gap-[3px]">
            <Radio on /><span className="w-[51px] whitespace-nowrap">墙高大于</span><Field v="4" />
            <span className="ml-[2px] whitespace-nowrap">m时，在墙半高处或洞口顶设置圈梁</span>
          </div>
          <div className="mt-[9px] h-[20px] leading-[20px] pl-[16px] whitespace-nowrap">（当洞口顶标高大于墙半高时，布置在洞口顶）</div>
          <div className="mt-[9px] flex items-center h-[20px] gap-[3px]">
            <Radio /><span className="w-[51px] whitespace-nowrap">墙高大于</span><Field v="4" />
            <span className="ml-[2px] w-[95px] whitespace-nowrap">m时，沿墙高度每</span><Field v="2000" w="w-[47px]" />
            <span className="ml-[2px] whitespace-nowrap">mm布置一道圈梁</span>
          </div>
          <div className="mt-[13px] flex items-center h-[20px] gap-[3px]">
            <Check /><span className="whitespace-nowrap">墙高大于2倍墙体长度在墙中设置一道圈梁</span>
          </div>
        </Group>
        <Group title="墙顶圈梁" className="w-[384px] h-[73px] mt-[18px] pl-[8px] pt-[11px]">
          <div className="flex items-center h-[20px] gap-[3px]">
            <Check /><span className="w-[52px] whitespace-nowrap">墙高大于</span><Field v="4" />
            <span className="ml-[2px] whitespace-nowrap">m时，在墙顶处设置圈梁</span>
          </div>
          <div className="mt-[11px] flex items-center h-[20px] gap-[3px]">
            <Check /><span className="whitespace-nowrap">山墙顶部圈梁随山墙变斜（山墙指顶标高不同的墙）</span>
          </div>
        </Group>
      </Group>
      <Group title="圈梁属性（单位：mm）" className="w-[443px] h-[141px] mt-[21px] pl-[3px] pt-[10px]">
        <div className="w-[434px] h-[126px] border-2 border-[#a8a8a8] bg-white pl-[1px]">
          <div className="grid grid-cols-[29px_repeat(7,57px)] h-[19px] border-b border-[#bbb] bg-gradient-to-b from-white to-[#eee]">
            {tableHeads.map((h, i) => (
              <div key={h} className={`text-center leading-[18px] border-r border-[#bbb] whitespace-nowrap ${i === 1 ? 'bg-gradient-to-b from-[#f8e0b0] to-[#f2bc68] text-[#7a0a8a]' : ''}`}>{h}</div>
            ))}
          </div>
          <div className="grid grid-cols-[29px_repeat(7,57px)] h-[19px] border-b border-[#bbb]">
            {tableRow.map((c, i) => (
              <div key={i} className={`pl-[2px] leading-[18px] border-r border-[#bbb] whitespace-nowrap ${i === 1 ? 'bg-[#e0eefc]' : ''}`}>{c}</div>
            ))}
          </div>
        </div>
      </Group>
      <div className="w-[437px] h-[39px] mt-[14px] -ml-px flex justify-between shrink-0">
        <div className="flex flex-col gap-[6px] pt-px">
          <div className="flex items-center gap-[3px] h-[13px]"><Check /><span>整楼生成</span></div>
          <div className="flex items-center gap-[3px] h-[13px]"><Check /><span>覆盖同位置圈梁</span></div>
        </div>
        <div className="flex gap-[9px]">
          <Btn label="添加行" w="w-[72px]" />
          <Btn label="删除行" w="w-[73px]" />
        </div>
      </div>
      <div className="mt-[8px] grid grid-cols-[30px_17px_1fr] auto-rows-[24px] leading-[24px] shrink-0 whitespace-nowrap">
        <span>注：</span><span>1.</span><span>圈梁属性只有一行且墙厚为空时，在所有墙上生成。</span>
        <span /><span>2.</span><span>墙高指的是墙净高，考虑扣除其上下的梁、板、压顶等混凝土构件。</span>
      </div>
      <div className="w-[437px] -ml-px mt-[24px] flex justify-end gap-[9px] shrink-0">
        <Btn label="确定" w="w-[72px]" />
        <Btn label="取消" w="w-[73px]" />
      </div>
    </div>
  </div>
);

// red markup drawn over the screenshot
const Annotations = () => (
  <svg viewBox="0 0 1095 801" className="absolute inset-0 w-[1095px] h-[801px] pointer-events-none">
    <g fill="#f44444">
      <path d="M657 213l12-11 3 1 148-50 115-36.500-115 43.500-145 51 -1 4z" />
      <path d="M567 527l18 3-4 5 91 69-93-66-2 5z" />
      <path d="M941 171l12-2-1-4 8 3-8 5 0-3z" />
    </g>
    <g fill="none" stroke="#f44444" strokeWidth="3.500">
      <rect x="938.500" y="88.500" width="113" height="60" />
      <path d="M7 398.500h60v27H7" />
      <rect x="649.500" y="610.500" width="72" height="45" />
    </g>
  </svg>
);

const App: React.FC = () => {
  return (
    <div className="relative w-[1095px] h-[801px] overflow-hidden bg-[#f0f0f0] text-[12px] text-[#111] leading-none flex flex-col font-['Liberation_Sans','Noto_Sans_CJK_SC',sans-serif]">
      <MenuBar />
      <TopToolbar />
      <div className="flex-1 flex min-h-0">
        <NavPanel />
        <MiddlePanel />
        <div className="w-[3px] shrink-0" />
        <div className="w-[836px] shrink-0 flex flex-col">
          <Row2 />
          <Row3 />
          <Row4 />
          <CadView />
          <StatusRow />
          <BottomPane />
        </div>
      </div>
      <Dialog />
      <Annotations />
    </div>
  );
};

export default App;
